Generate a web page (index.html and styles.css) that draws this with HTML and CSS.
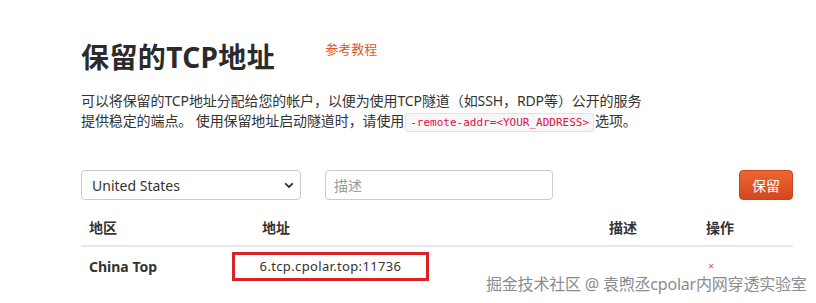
FILE: index.html
```html
<!DOCTYPE html>
<html lang="zh-CN">
<head>
    <meta charset="UTF-8">
    <meta name="viewport" content="width=device-width, initial-scale=1.0">
    <title>保留的TCP地址</title>
    <link rel="stylesheet" href="styles.css">
</head>
<body>
    <div class="page">
        <div class="page-header">
            <h2 class="title">保留的TCP地址</h2>
            <a class="doc-link" href="#">参考教程</a>
        </div>
        <p class="intro">
            可以将保留的TCP地址分配给您的帐户，以便为使用TCP隧道（如SSH，RDP等）公开的服务<br>
            提供稳定的端点。 使用保留地址启动隧道时，请使用<code>-remote-addr=&lt;YOUR_ADDRESS&gt;</code>选项。
        </p>

        <form class="reserve-form">
            <div class="select-wrap">
                <select class="field region-select">
                    <option>United States</option>
                    <option>China Top</option>
                </select>
                <svg class="chevron" width="10" height="7" viewBox="0 0 10 7">
                    <path d="M1.2 1.3 L5 5 L8.8 1.3" fill="none" stroke="#333" stroke-width="1.8"/>
                </svg>
            </div>
            <input class="field desc-input" type="text" placeholder="描述">
            <button class="btn-reserve" type="button">保留</button>
        </form>

        <table class="addr-table">
            <thead>
                <tr>
                    <th class="col-region">地区</th>
                    <th class="col-addr">地址</th>
                    <th class="col-desc">描述</th>
                    <th class="col-op">操作</th>
                </tr>
            </thead>
            <tbody>
                <tr>
                    <td class="region">China Top</td>
                    <td class="addr"><span class="highlight">6.tcp.cpolar.top:11736</span></td>
                    <td></td>
                    <td><a class="remove" href="#">×</a></td>
                </tr>
            </tbody>
        </table>
    </div>

    <div class="watermark">掘金技术社区 @ 袁煦丞cpolar内网穿透实验室</div>
</body>
</html>
```

FILE: styles.css
```css
body {
    margin: 0;
    background-color: #ffffff;
    color: #333333;
    font-family: "Noto Sans", "Noto Sans CJK SC", sans-serif;
    font-size: 14px;
}

.page {
    width: 712px;
    padding: 38px 0 0 81px;
}

.page-header {
    display: flex;
    align-items: flex-start;
}

.title {
    margin: 2px 0 0;
    font-size: 28px;
    font-weight: bold;
    line-height: 34px;
    letter-spacing: 0.4px;
    color: #2b2b2b;
}

.doc-link {
    margin-left: 50px;
    color: #dd5a2b;
    text-decoration: none;
    font-size: 13px;
    line-height: 22px;
}

.intro {
    margin: 17px 0 0;
    line-height: 20px;
    font-size: 14px;
    letter-spacing: -0.1px;
}

.intro code {
    font-family: "DejaVu Sans Mono", monospace;
    font-size: 11px;
    letter-spacing: 0;
    color: #d14;
    background-color: #f7f7f9;
    border: 1px solid #e1e1e8;
    border-radius: 3px;
    padding: 2px 4px;
    margin: 0 1px;
}

.reserve-form {
    display: flex;
    margin-top: 37px;
    height: 30px;
}

.field {
    box-sizing: border-box;
    height: 30px;
    border: 1px solid #cccccc;
    border-radius: 4px;
    background-color: #ffffff;
    font-family: "Noto Sans", "Noto Sans CJK SC", sans-serif;
    font-size: 14px;
    color: #333333;
}

.select-wrap {
    position: relative;
    width: 220px;
}

.region-select {
    width: 100%;
    appearance: none;
    -webkit-appearance: none;
    padding: 0 10px;
}

.chevron {
    position: absolute;
    right: 7px;
    top: 12px;
}

.desc-input {
    width: 228px;
    margin-left: 24px;
    padding: 0 8px;
}

.desc-input::placeholder {
    color: #999999;
}

.btn-reserve {
    margin-left: auto;
    width: 54px;
    height: 30px;
    border: 1px solid #c94418;
    border-radius: 4px;
    background: linear-gradient(#eb6634, #d4471d);
    color: #ffffff;
    font-family: "Noto Sans", "Noto Sans CJK SC", sans-serif;
    font-size: 14px;
    padding: 0;
}

.addr-table {
    width: 712px;
    margin-top: 9px;
    border-collapse: collapse;
    font-size: 14px;
}

.addr-table th {
    text-align: left;
    font-weight: bold;
    height: 36px;
    padding: 0 8px;
    border-bottom: 2px solid #e8e8e8;
    vertical-align: middle;
}

.addr-table td {
    height: 39px;
    padding: 0 8px;
    vertical-align: middle;
}

.col-region {
    width: 157px;
}

.col-addr {
    width: 331px;
}

.col-desc {
    width: 81px;
}

.region {
    font-weight: bold;
}

.highlight {
    display: inline-block;
    margin-left: -30px;
    margin-top: -1px;
    width: 191px;
    height: 23px;
    line-height: 23px;
    border: 3px solid #d9222a;
    text-align: center;
    font-size: 13px;
    letter-spacing: 0.35px;
}

.remove {
    color: #d9534f;
    text-decoration: none;
    font-size: 11px;
    margin-left: 2px;
    position: relative;
    top: -2px;
}

.watermark {
    position: absolute;
    left: 486px;
    top: 271px;
    font-size: 16px;
    letter-spacing: -0.2px;
    color: #8c8c8c;
    text-shadow: 0 0 2px #ffffff, 0 0 1px #ffffff;
    white-space: nowrap;
}
```
